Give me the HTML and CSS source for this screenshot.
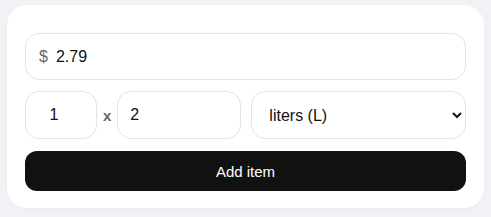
FILE: index.html
```html
<!DOCTYPE html>
<html lang="en">
<head>
  <meta charset="UTF-8" />
  <meta name="viewport" content="width=device-width, initial-scale=1.0" />
  <title>Add item</title>
  <link rel="stylesheet" href="styles.css">
</head>
<body>

  <form class="card" onsubmit="return false">
    <label class="price-field">
      <span class="currency">$</span>
      <input class="price-input" type="text" value="2.79" />
    </label>

    <div class="qty-row">
      <input class="field qty" type="text" value="1" />
      <span class="times">x</span>
      <input class="field amount" type="text" value="2" />
      <select class="field unit">
        <option>liters (L)</option>
        <option>milliliters (mL)</option>
        <option>kilograms (kg)</option>
        <option>grams (g)</option>
        <option>pieces</option>
      </select>
    </div>

    <button class="add-btn" type="submit">Add item</button>
  </form>

</body>
</html>
```

FILE: styles.css
```css
* {
  box-sizing: border-box;
}

body {
  margin: 0;
  padding: 5px 7px 8px;
  font-family: "Liberation Sans", Arial, sans-serif;
  background: #f1f2f6;
  color: #111;
}

.card {
  display: flex;
  flex-direction: column;
  gap: 11px;
  background: white;
  border-radius: 20px;
  padding: 28px 18px 17px;
  box-shadow: 0 1px 3px rgba(0, 0, 0, 0.03);
}

.price-field {
  display: flex;
  align-items: center;
  gap: 8px;
  height: 47px;
  padding: 0 13px;
  border: 1px solid #e3e3e3;
  border-radius: 14px;
}

.currency {
  color: #666;
  font-size: 16px;
}

.price-input {
  flex-grow: 1;
  border: none;
  outline: none;
  padding: 0;
  font: inherit;
  font-size: 16px;
  color: #111;
  background: none;
}

.qty-row {
  display: grid;
  grid-template-columns: 72px auto 124px 1fr;
  align-items: center;
  column-gap: 6px;
}

.field {
  height: 48px;
  border: 1px solid #e3e3e3;
  border-radius: 14px;
  background: white;
  font: inherit;
  font-size: 16px;
  color: #111;
  outline: none;
}

.qty {
  text-align: center;
  padding: 0 14px 0 0;
}

.amount {
  padding: 0 12px;
}

.times {
  color: #666;
  font-size: 15px;
  font-weight: bold;
}

.unit {
  margin-left: 4px;
  padding: 0 4px 0 13px;
}

.add-btn {
  margin-top: 1px;
  height: 40px;
  border: none;
  border-radius: 12px;
  background: #111;
  color: white;
  font: inherit;
  font-size: 15px;
  cursor: pointer;
}
```
